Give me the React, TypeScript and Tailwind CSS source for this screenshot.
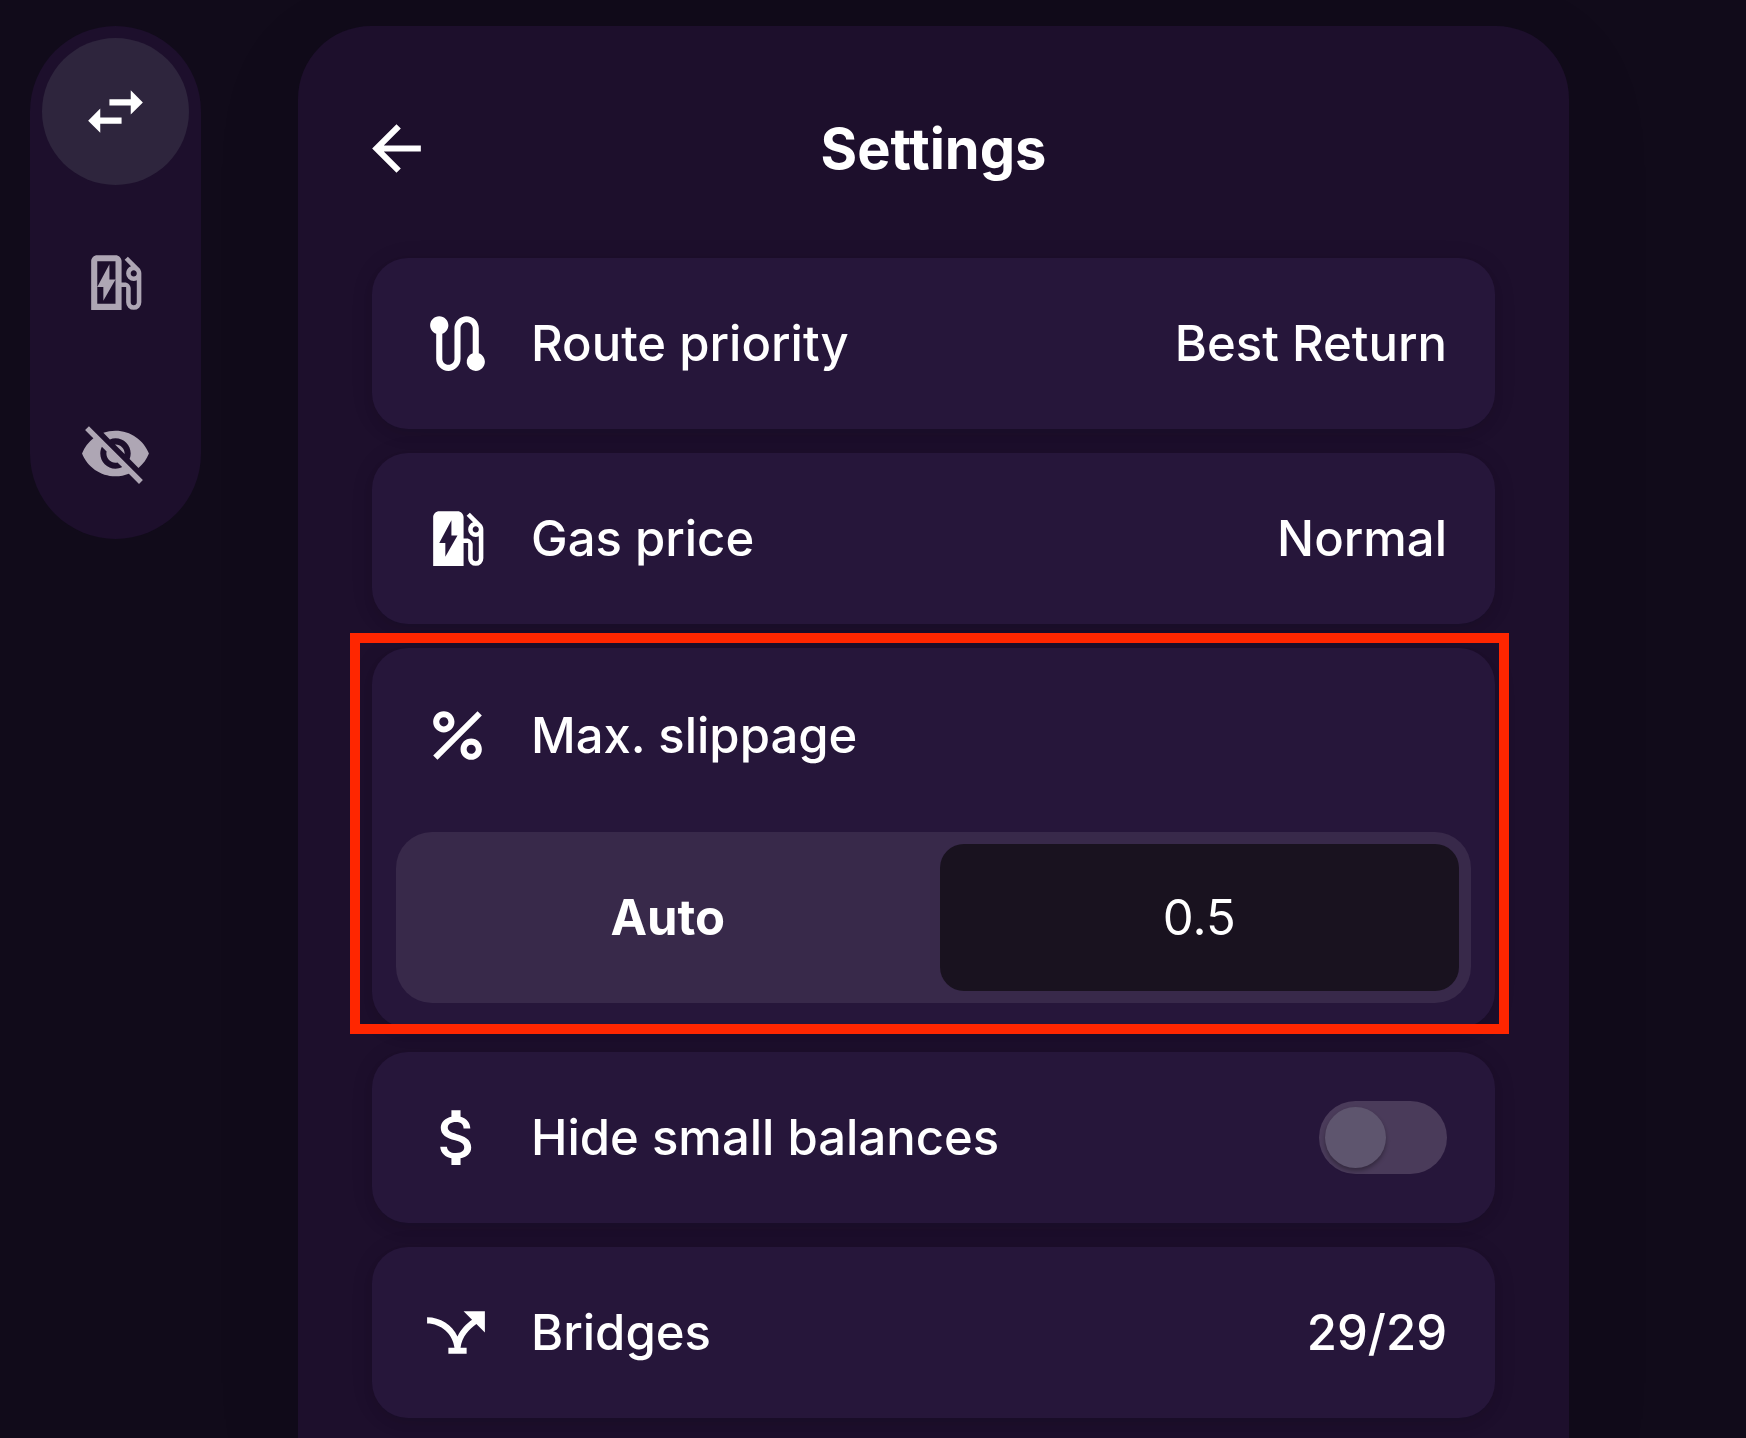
import { useState, type ReactNode } from "react";
import type { IconType } from "react-icons";
import {
  MdAirlineStops,
  MdArrowBack,
  MdAttachMoney,
  MdEvStation,
  MdOutlineEvStation,
  MdPercent,
  MdRoute,
  MdSwapHoriz,
  MdVisibilityOff,
} from "react-icons/md";

const tabs: { label: string; icon: IconType }[] = [
  { label: "Exchange", icon: MdSwapHoriz },
  { label: "Refuel", icon: MdOutlineEvStation },
  { label: "Hidden", icon: MdVisibilityOff },
];

const card =
  "rounded-[36px] bg-[#26163a] shadow-[0_6px_12px_rgba(0,0,0,0.06),0_2px_24px_rgba(0,0,0,0.08)]";
const row = "flex h-[171px] w-full items-center pr-12 pl-[49px] text-left";

function RowLabel({ icon: Icon, children }: { icon: IconType; children: ReactNode }) {
  return (
    <span className="flex flex-1 items-center gap-[37px]">
      <Icon className="size-[73px] shrink-0" aria-hidden />
      <span>{children}</span>
    </span>
  );
}

function LinkRow({ icon, label, value }: { icon: IconType; label: string; value: string }) {
  return (
    <button type="button" className={`${card} ${row}`}>
      <RowLabel icon={icon}>{label}</RowLabel>
      <span>{value}</span>
    </button>
  );
}

export default function App() {
  const [tab, setTab] = useState(0);
  const [slippage, setSlippage] = useState("0.5");
  const [hideSmall, setHideSmall] = useState(false);

  return (
    <div className="flex min-h-screen items-stretch overflow-hidden bg-[#110b1a] pt-[26px] pr-[177px] pl-[30px] font-['Inter',sans-serif] text-[49px] leading-[60px] font-medium text-white">
      <nav
        aria-label="Modes"
        className="mr-[97px] flex shrink-0 flex-col gap-6 self-start rounded-full bg-[#1d0f2c] p-3"
      >
        {tabs.map(({ label, icon: Icon }, i) => (
          <button
            key={label}
            type="button"
            aria-label={label}
            aria-pressed={i === tab}
            onClick={() => setTab(i)}
            className={
              i === tab
                ? "flex size-[147px] items-center justify-center rounded-full bg-[#2e253d] text-white"
                : "flex size-[147px] items-center justify-center rounded-full text-[#aea6b4]"
            }
          >
            <Icon className="size-[73px]" aria-hidden />
          </button>
        ))}
      </nav>

      <main className="min-w-0 flex-1 rounded-t-[73px] bg-[#1d0f2c] px-[74px] pb-5 shadow-[0_24px_96px_rgba(0,0,0,0.08)]">
        <header className="grid h-[232px] grid-cols-[73px_1fr_73px] items-start pt-[86px]">
          <button type="button" aria-label="Back" className="-ml-3">
            <MdArrowBack className="size-[73px]" aria-hidden />
          </button>
          <h1 className="text-center text-[56px] leading-[75px] font-bold">Settings</h1>
        </header>

        <div className="flex flex-col gap-6">
          <LinkRow icon={MdRoute} label="Route priority" value="Best Return" />
          <LinkRow icon={MdEvStation} label="Gas price" value="Normal" />

          <section className={`${card} relative pt-0.5 pb-[25px]`}>
            <div className={row}>
              <RowLabel icon={MdPercent}>Max. slippage</RowLabel>
            </div>
            <div className="mx-6 mt-[11px] grid grid-cols-2 gap-3 rounded-[36px] bg-[#38294a] p-3">
              <button type="button" className="h-[147px] rounded-3xl font-bold">
                Auto
              </button>
              <input
                type="text"
                inputMode="decimal"
                aria-label="Custom slippage"
                value={slippage}
                onChange={(e) => setSlippage(e.target.value)}
                className="h-[147px] w-full min-w-0 rounded-3xl bg-[#19121f] text-center font-normal outline-none"
              />
            </div>
            <div className="pointer-events-none absolute -top-[15px] -right-3.5 -bottom-1.5 -left-[22px] border-10 border-[#ff2600]" />
          </section>

          <label className={`${card} ${row}`}>
            <RowLabel icon={MdAttachMoney}>Hide small balances</RowLabel>
            <input
              type="checkbox"
              role="switch"
              checked={hideSmall}
              onChange={(e) => setHideSmall(e.target.checked)}
              className="flex h-[73px] w-32 shrink-0 appearance-none items-center rounded-full bg-[#4a3b5a] p-1.5 before:size-[61px] before:rounded-full before:bg-[#5e556e] before:shadow-[0_3px_4px_rgba(0,0,0,0.3)] checked:justify-end"
            />
          </label>

          <LinkRow icon={MdAirlineStops} label="Bridges" value="29/29" />
        </div>
      </main>
    </div>
  );
}
